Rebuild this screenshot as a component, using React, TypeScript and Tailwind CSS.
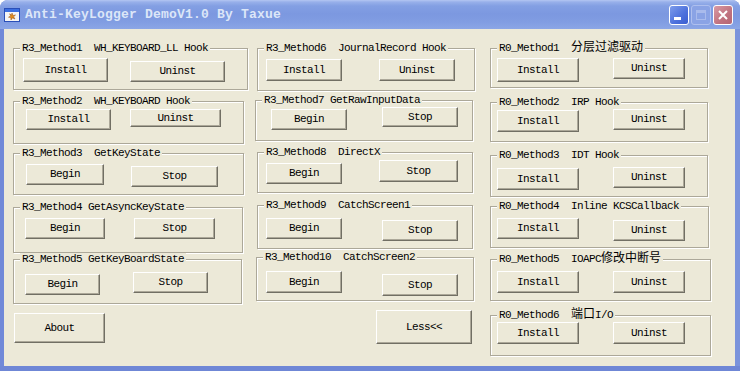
import React from 'react';

type Btn = { label: string; cls: string };
type Group = { title: React.ReactNode; cls: string; buttons: Btn[] };

const cjk = (s: string) => <span className="text-[12px] tracking-normal">{s}</span>;

const col1: Group[] = [
  {
    title: 'R3_Method1  WH_KEYBOARD_LL Hook',
    cls: 'ml-0 mt-[19px] w-[235px] h-[42px]',
    buttons: [
      { label: 'Install', cls: 'ml-[9px] mt-[9px] w-[85px] h-[24px]' },
      { label: 'Uninst', cls: 'ml-[22px] mt-[12px] w-[95px] h-[21px]' },
    ],
  },
  {
    title: 'R3_Method2  WH_KEYBOARD Hook',
    cls: 'ml-0 mt-[11px] w-[231px] h-[43px]',
    buttons: [
      { label: 'Install', cls: 'ml-[12px] mt-[7px] w-[85px] h-[21px]' },
      { label: 'Uninst', cls: 'ml-[19px] mt-[7px] w-[91px] h-[18px]' },
    ],
  },
  {
    title: 'R3_Method3  GetKeyState',
    cls: 'ml-0 mt-[9px] w-[231px] h-[42px]',
    buttons: [
      { label: 'Begin', cls: 'ml-[12px] mt-[10px] w-[78px] h-[21px]' },
      { label: 'Stop', cls: 'ml-[27px] mt-[12px] w-[87px] h-[21px]' },
    ],
  },
  {
    title: 'R3_Method4 GetAsyncKeyState',
    cls: 'ml-0 mt-[12px] w-[230px] h-[46px]',
    buttons: [
      { label: 'Begin', cls: 'ml-[11px] mt-[10px] w-[80px] h-[21px]' },
      { label: 'Stop', cls: 'ml-[29px] mt-[10px] w-[81px] h-[21px]' },
    ],
  },
  {
    title: 'R3_Method5 GetKeyBoardState',
    cls: 'ml-0 mt-[6px] w-[229px] h-[45px]',
    buttons: [
      { label: 'Begin', cls: 'ml-[11px] mt-[14px] w-[75px] h-[21px]' },
      { label: 'Stop', cls: 'ml-[33px] mt-[12px] w-[75px] h-[21px]' },
    ],
  },
];

const col2: Group[] = [
  {
    title: 'R3_Method6  JournalRecord Hook',
    cls: 'ml-[2px] mt-[19px] w-[218px] h-[43px]',
    buttons: [
      { label: 'Install', cls: 'ml-[8px] mt-[10px] w-[76px] h-[22px]' },
      { label: 'Uninst', cls: 'ml-[37px] mt-[10px] w-[76px] h-[22px]' },
    ],
  },
  {
    title: 'R3_Method7 GetRawInputData',
    cls: 'ml-0 mt-[9px] w-[218px] h-[41px]',
    buttons: [
      { label: 'Begin', cls: 'ml-[15px] mt-[8px] w-[76px] h-[21px]' },
      { label: 'Stop', cls: 'ml-[35px] mt-[6px] w-[76px] h-[20px]' },
    ],
  },
  {
    title: 'R3_Method8  DirectX',
    cls: 'ml-[2px] mt-[11px] w-[216px] h-[41px]',
    buttons: [
      { label: 'Begin', cls: 'ml-[8px] mt-[10px] w-[76px] h-[21px]' },
      { label: 'Stop', cls: 'ml-[37px] mt-[7px] w-[79px] h-[22px]' },
    ],
  },
  {
    title: 'R3_Method9  CatchScreen1',
    cls: 'ml-[2px] mt-[12px] w-[216px] h-[44px]',
    buttons: [
      { label: 'Begin', cls: 'ml-[8px] mt-[12px] w-[76px] h-[21px]' },
      { label: 'Stop', cls: 'ml-[40px] mt-[14px] w-[76px] h-[21px]' },
    ],
  },
  {
    title: 'R3_Method10  CatchScreen2',
    cls: 'ml-[1px] mt-[8px] w-[218px] h-[44px]',
    buttons: [
      { label: 'Begin', cls: 'ml-[9px] mt-[13px] w-[76px] h-[22px]' },
      { label: 'Stop', cls: 'ml-[40px] mt-[16px] w-[76px] h-[22px]' },
    ],
  },
];

const col3: Group[] = [
  {
    title: <>R0_Method1  {cjk('分层过滤驱动')}</>,
    cls: 'ml-0 mt-[19px] w-[218px] h-[40px]',
    buttons: [
      { label: 'Install', cls: 'ml-[6px] mt-[9px] w-[82px] h-[24px]' },
      { label: 'Uninst', cls: 'ml-[34px] mt-[9px] w-[72px] h-[21px]' },
    ],
  },
  {
    title: 'R0_Method2  IRP Hook',
    cls: 'ml-0 mt-[14px] w-[218px] h-[40px]',
    buttons: [
      { label: 'Install', cls: 'ml-[6px] mt-[7px] w-[82px] h-[22px]' },
      { label: 'Uninst', cls: 'ml-[34px] mt-[6px] w-[72px] h-[21px]' },
    ],
  },
  {
    title: 'R0_Method3  IDT Hook',
    cls: 'ml-0 mt-[13px] w-[218px] h-[42px]',
    buttons: [
      { label: 'Install', cls: 'ml-[6px] mt-[12px] w-[82px] h-[22px]' },
      { label: 'Uninst', cls: 'ml-[34px] mt-[11px] w-[72px] h-[21px]' },
    ],
  },
  {
    title: 'R0_Method4  Inline KCSCallback',
    cls: 'ml-0 mt-[9px] w-[219px] h-[42px]',
    buttons: [
      { label: 'Install', cls: 'ml-[6px] mt-[11px] w-[82px] h-[21px]' },
      { label: 'Uninst', cls: 'ml-[34px] mt-[13px] w-[72px] h-[21px]' },
    ],
  },
  {
    title: <>R0_Method5  IOAPC{cjk('修改中断号')}</>,
    cls: 'ml-0 mt-[11px] w-[221px] h-[42px]',
    buttons: [
      { label: 'Install', cls: 'ml-[6px] mt-[11px] w-[82px] h-[22px]' },
      { label: 'Uninst', cls: 'ml-[34px] mt-[11px] w-[72px] h-[22px]' },
    ],
  },
  {
    title: <>R0_Method6  {cjk('端口')}I/O</>,
    cls: 'ml-0 mt-[14px] w-[221px] h-[41px]',
    buttons: [
      { label: 'Install', cls: 'ml-[6px] mt-[6px] w-[82px] h-[22px]' },
      { label: 'Uninst', cls: 'ml-[34px] mt-[6px] w-[72px] h-[22px]' },
    ],
  },
];

const btnBase =
  'flex shrink-0 items-center justify-center bg-[#ece9d8] border border-t-white border-l-white border-r-[#716f64] border-b-[#716f64] shadow-[inset_-1px_-1px_0_#aca899] text-[11px] leading-none tracking-[-0.6px] text-black';

const Button = ({ label, cls }: Btn) => <div className={`${btnBase} ${cls}`}>{label}</div>;

const GroupBox = ({ title, cls, buttons }: Group) => (
  <div
    className={`relative flex shrink-0 items-start border border-[#aca899] shadow-[inset_1px_1px_0_#fff,1px_1px_0_#fff] ${cls}`}
  >
    <span className="absolute left-[6px] top-[-7px] whitespace-pre bg-[#ece9d8] px-[2px] text-[11px] leading-[12px] tracking-[-0.6px] text-black">
      {title}
    </span>
    {buttons.map((b, i) => (
      <Button key={i} {...b} />
    ))}
  </div>
);

const AppIcon = () => (
  <svg width="16" height="16" viewBox="0 0 16 16">
    <rect x="0.5" y="1.5" width="15" height="13" fill="#f4f4f4" stroke="#2a4fb8" />
    <rect x="1" y="2" width="14" height="3" fill="#3b6ee0" />
    <path d="M8 6 L9 8.5 L11.5 8 L9.6 9.8 L11 12 L8.4 10.9 L7 13 L6.8 10.6 L4.5 10.2 L6.6 8.9 L5.6 6.8 L7.6 8 Z" fill="#e08a1c" stroke="#9a5410" strokeWidth="0.5" />
  </svg>
);

export default function App() {
  return (
    <div className="h-[371px] w-[740px] bg-white font-['Liberation_Mono','Noto_Sans_CJK_SC',monospace]">
      <div className="flex h-full w-full flex-col overflow-hidden rounded-t-[8px] bg-[#7a93db]">
        {/* title bar */}
        <div className="flex h-[29px] shrink-0 items-center bg-[linear-gradient(to_bottom,#b4c6f2_0px,#98b0ea_2px,#839fe3_6px,#7c98e0_14px,#819de2_22px,#8ba6e6_29px)] pl-[4px] pr-[7px]">
          <AppIcon />
          <span className="ml-[5px] mt-[1px] text-[13px] font-bold tracking-[0.2px] text-[#dce6f8]">
            Anti-KeyLogger DemoV1.0 By Taxue
          </span>
          <div className="ml-auto flex items-center gap-[2px]">
            <div className="relative h-[20px] w-[20px] rounded-[3px] border border-white bg-[linear-gradient(135deg,#7d9ceb,#4c70dc_60%,#3c5fd0)]">
              <div className="absolute bottom-[4px] left-[4px] h-[3px] w-[7px] bg-white" />
            </div>
            <div className="relative h-[20px] w-[20px] rounded-[3px] border border-[#aebfee] bg-[#8aa3e5]">
              <div className="absolute left-[4px] top-[4px] h-[10px] w-[10px] border border-[#a9bbec] border-t-[3px]" />
            </div>
            <div className="flex h-[20px] w-[20px] items-center justify-center rounded-[3px] border border-white bg-[linear-gradient(135deg,#d99aa4,#c0727f_60%,#b66673)]">
              <svg width="12" height="12" viewBox="0 0 12 12">
                <path d="M2 2 L10 10 M10 2 L2 10" stroke="#fff" strokeWidth="2" />
              </svg>
            </div>
          </div>
        </div>

        {/* body */}
        <div className="flex min-h-0 flex-1">
          <div className="w-[4px] shrink-0 bg-[#7189d8]" />
          <div className="flex h-[337px] w-[731px] items-start bg-[#ece9d8]">
            <div className="ml-[9px] flex w-[235px] shrink-0 flex-col items-start">
              {col1.map((g, i) => (
                <GroupBox key={i} {...g} />
              ))}
              <Button label="About" cls="ml-[1px] mt-[9px] w-[91px] h-[30px]" />
            </div>
            <div className="ml-[7px] flex w-[219px] shrink-0 flex-col items-start">
              {col2.map((g, i) => (
                <GroupBox key={i} {...g} />
              ))}
              <Button label="Less<<" cls="ml-[121px] mt-[9px] w-[96px] h-[34px]" />
            </div>
            <div className="ml-[16px] flex w-[221px] shrink-0 flex-col items-start">
              {col3.map((g, i) => (
                <GroupBox key={i} {...g} />
              ))}
            </div>
          </div>
          <div className="w-[5px] shrink-0 bg-[#7a93db]" />
        </div>
        <div className="h-[5px] shrink-0 bg-[#6f87d6]" />
      </div>
    </div>
  );
}
